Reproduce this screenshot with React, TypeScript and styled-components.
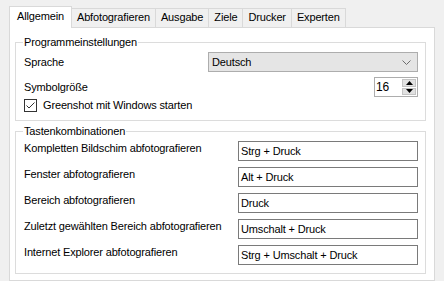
import React from "react";
import styled, { createGlobalStyle } from "styled-components";

const Global = createGlobalStyle`
  html, body { margin: 0; padding: 0; background: #f0f0f0; }
  body { font-family: "Liberation Sans", Arial, sans-serif; font-size: 11px; letter-spacing: -0.15px; color: #000; }
  * { box-sizing: border-box; }
`;

const Window = styled.div`
  width: 444px;
  height: 281px;
  padding: 6px 9px 0 9px;
  display: flex;
  flex-direction: column;
  overflow: hidden;
`;

const TabStrip = styled.div`
  display: flex;
  align-items: flex-end;
  height: 22px;
  position: relative;
  z-index: 1;
`;

const Tab = styled.div<{ $active?: boolean }>`
  height: ${(p) => (p.$active ? 22 : 20)}px;
  padding: 0 ${(p) => (p.$active ? 7 : 5)}px;
  margin-left: ${(p) => (p.$active ? 0 : -1)}px;
  display: flex;
  align-items: center;
  border: 1px solid #d9d9d9;
  border-bottom: ${(p) => (p.$active ? "none" : "1px solid #d9d9d9")};
  background: ${(p) => (p.$active ? "#fff" : "#f0f0f0")};
  line-height: 13px;
  padding-bottom: ${(p) => (p.$active ? 2 : 1)}px;
  &:first-child { margin-left: 0; }
`;

const Panel = styled.div`
  margin-top: -1px;
  width: 426px;
  flex: 1;
  background: #fff;
  border: 1px solid #d9d9d9;
  padding: 7px 8px 0 5px;
`;

const Group = styled.fieldset<{ $gapTop?: number }>`
  margin: ${(p) => p.$gapTop ?? 0}px 0 0 0;
  border: 1px solid #dcdcdc;
  padding: 3px 7px 8px 8px;
  min-width: 0;
`;

const Legend = styled.legend`
  margin-left: -1px;
  padding: 0 1px;
  line-height: 14px;
  height: 14px;
`;

const Row = styled.div<{ $mt?: number }>`
  display: flex;
  align-items: center;
  justify-content: space-between;
  height: 20px;
  margin-top: ${(p) => p.$mt ?? 0}px;
`;

const KeyRow = styled.div<{ $mt?: number }>`
  display: flex;
  align-items: flex-start;
  justify-content: space-between;
  height: 20px;
  margin-top: ${(p) => p.$mt ?? 0}px;
`;

const Label = styled.span`
  line-height: 13px;
`;

const KeyLabel = styled.span`
  line-height: 13px;
  padding-top: 1px;
`;

const Combo = styled.div`
  width: 210px;
  height: 20px;
  background: #e5e5e5;
  border: 1px solid #adadad;
  display: flex;
  align-items: center;
  justify-content: space-between;
  padding: 0 6px 0 3px;
`;

const Spinner = styled.div`
  width: 44px;
  height: 20px;
  border: 1px solid #adadad;
  background: #fff;
  display: flex;
  align-items: stretch;
`;

const SpinValue = styled.div`
  flex: 1;
  padding-left: 1px;
  line-height: 18px;
  font-size: 12px;
`;

const SpinButtons = styled.div`
  width: 15px;
  display: flex;
  flex-direction: column;
  padding: 1px 1px 1px 0;
  gap: 1px;
`;

const SpinButton = styled.div`
  flex: 1;
  background: #e1e1e1;
  border: 1px solid #c4c4c4;
  display: flex;
  align-items: center;
  justify-content: center;
`;

const CheckRow = styled.label`
  display: flex;
  align-items: center;
  gap: 6px;
  margin-top: 2px;
  height: 13px;
  line-height: 13px;
`;

const CheckBox = styled.span`
  width: 13px;
  height: 13px;
  border: 1px solid #333;
  background: #fff;
  display: flex;
  align-items: center;
  justify-content: center;
`;

const TextBox = styled.div`
  width: 180px;
  height: 20px;
  border: 1px solid #7a7a7a;
  background: #fff;
  padding-left: 2px;
  line-height: 18px;
`;

const Chevron = () => (
  <svg width="9" height="5" viewBox="0 0 9 5">
    <path d="M0.5 0.5 L4.5 4.5 L8.5 0.5" stroke="#6d6d6d" strokeWidth="1" fill="none" />
  </svg>
);

const Tri = ({ up }: { up?: boolean }) => (
  <svg width="7" height="4" viewBox="0 0 7 4">
    <path d={up ? "M0 4 L3.5 0 L7 4 Z" : "M0 0 L3.5 4 L7 0 Z"} fill="#000" />
  </svg>
);

const tabs = ["Allgemein", "Abfotografieren", "Ausgabe", "Ziele", "Drucker", "Experten"];

const keys: [string, string][] = [
  ["Kompletten Bildschim abfotografieren", "Strg + Druck"],
  ["Fenster abfotografieren", "Alt + Druck"],
  ["Bereich abfotografieren", "Druck"],
  ["Zuletzt gewählten Bereich abfotografieren", "Umschalt + Druck"],
  ["Internet Explorer abfotografieren", "Strg + Umschalt + Druck"],
];

export default function App() {
  return (
    <Window>
      <Global />
      <TabStrip>
        {tabs.map((t, i) => (
          <Tab key={t} $active={i === 0}>
            {t}
          </Tab>
        ))}
      </TabStrip>
      <Panel>
        <Group>
          <Legend>Programmeinstellungen</Legend>
          <Row>
            <Label>Sprache</Label>
            <Combo>
              <span>Deutsch</span>
              <Chevron />
            </Combo>
          </Row>
          <Row $mt={5}>
            <Label>Symbolgröße</Label>
            <Spinner>
              <SpinValue>16</SpinValue>
              <SpinButtons>
                <SpinButton>
                  <Tri up />
                </SpinButton>
                <SpinButton>
                  <Tri />
                </SpinButton>
              </SpinButtons>
            </Spinner>
          </Row>
          <CheckRow>
            <CheckBox>
              <svg width="11" height="11" viewBox="0 0 11 11">
                <path d="M1.5 5.5 L4 8 L9.5 2.5" stroke="#333" strokeWidth="1" fill="none" />
              </svg>
            </CheckBox>
            <span>Greenshot mit Windows starten</span>
          </CheckRow>
        </Group>
        <Group $gapTop={3}>
          <Legend>Tastenkombinationen</Legend>
          {keys.map(([l, v], i) => (
            <KeyRow key={l} $mt={i === 0 ? 0 : 6}>
              <KeyLabel>{l}</KeyLabel>
              <TextBox>{v}</TextBox>
            </KeyRow>
          ))}
        </Group>
      </Panel>
    </Window>
  );
}
